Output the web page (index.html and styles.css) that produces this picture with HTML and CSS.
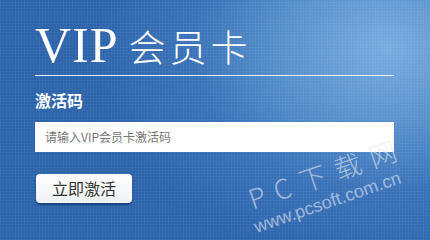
FILE: index.html
```html
<!DOCTYPE html>
<html lang="zh-CN">
<head>
<meta charset="utf-8">
<title>VIP会员卡</title>
<link rel="stylesheet" href="styles.css">
</head>
<body>
<div class="card">
  <div class="content">
    <h1 class="title"><span class="vip">VIP</span><span class="cn">会员卡</span></h1>
    <div class="label">激活码</div>
    <div class="input">请输入VIP会员卡激活码</div>
    <button class="btn">立即激活</button>
  </div>
  <div class="watermark">
    <div class="wm1">PC下载网</div>
    <div class="wm2">www.pcsoft.com.cn</div>
  </div>
</div>
</body>
</html>
```
FILE: styles.css
```css
html, body {
  margin: 0;
  padding: 0;
}
.card {
  position: relative;
  width: 430px;
  height: 240px;
  overflow: hidden;
  background:
    repeating-linear-gradient(90deg, rgba(255,255,255,0.04) 0 1px, transparent 1px 3px),
    repeating-linear-gradient(0deg, rgba(255,255,255,0.04) 0 1px, transparent 1px 3px),
    radial-gradient(ellipse 300px 220px at 90% 20%, #78ace0 0%, #5890cc 35%, #3a72b8 65%, #2c63ab 100%);
  background-color: #2c63ab;
  font-family: "Noto Sans CJK SC", "Noto Sans", sans-serif;
}
.content {
  padding: 0 36px 0 35px;
  display: flex;
  flex-direction: column;
  align-items: flex-start;
}
.title {
  margin: 0;
  padding-top: 18px;
  height: 57px;
  width: 359px;
  border-bottom: 1px solid #e8f0fa;
  display: flex;
  align-items: baseline;
  color: #ffffff;
  font-weight: normal;
  line-height: 54px;
}
.vip {
  font-family: "Liberation Serif", "Times New Roman", serif;
  font-size: 50px;
  letter-spacing: 1px;
}
.cn {
  margin-left: 10px;
  font-family: "Noto Sans CJK SC", sans-serif;
  font-weight: 200;
  font-size: 37px;
  letter-spacing: 4px;
}
.label {
  margin-top: 12px;
  color: #ffffff;
  font-size: 16px;
  font-weight: bold;
  line-height: 24px;
}
.input {
  margin-top: 10px;
  box-sizing: border-box;
  width: 359px;
  height: 30px;
  background: #ffffff;
  color: #777777;
  font-size: 12px;
  line-height: 30px;
  padding-left: 10px;
}
.btn {
  margin-top: 22px;
  margin-left: 1px;
  width: 96px;
  height: 29px;
  border: none;
  border-radius: 4px;
  background: linear-gradient(#ffffff, #eef1f5);
  box-shadow: 0 2px 2px rgba(0, 20, 60, 0.45);
  color: #333333;
  font-family: "Noto Sans CJK SC", sans-serif;
  font-size: 16px;
  padding: 0;
  line-height: 29px;
}
.watermark {
  position: absolute;
  left: 228px;
  top: 138px;
  width: 200px;
  transform: rotate(-19deg);
  transform-origin: 0 0;
  color: rgba(225, 232, 242, 0.62);
}
.wm1 {
  position: absolute;
  left: 0;
  top: 50px;
  font-family: "Noto Sans CJK SC", sans-serif;
  font-weight: 300;
  font-size: 27px;
  letter-spacing: 10px;
  white-space: nowrap;
  line-height: 30px;
}
.wm2 {
  position: absolute;
  left: -4px;
  top: 83px;
  font-family: "Liberation Sans", Arial, sans-serif;
  font-size: 18px;
  white-space: nowrap;
  line-height: 20px;
}
```
